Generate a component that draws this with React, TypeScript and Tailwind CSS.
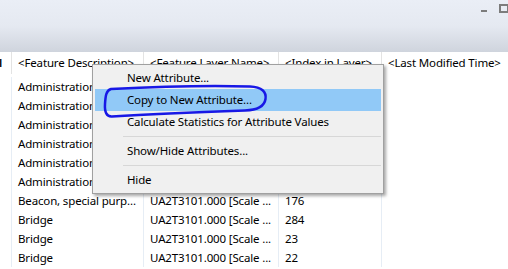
import React from 'react';

type Row = { desc: string; layer: string; index: string };

const rows: Row[] = [
  { desc: 'Administration area', layer: 'UA2T3101.000 [Scale ...', index: '12' },
  { desc: 'Administration area', layer: 'UA2T3101.000 [Scale ...', index: '13' },
  { desc: 'Administration area', layer: 'UA2T3101.000 [Scale ...', index: '14' },
  { desc: 'Administration area', layer: 'UA2T3101.000 [Scale ...', index: '15' },
  { desc: 'Administration area', layer: 'UA2T3101.000 [Scale ...', index: '16' },
  { desc: 'Administration area', layer: 'UA2T3101.000 [Scale ...', index: '17' },
  { desc: 'Beacon, special purp...', layer: 'UA2T3101.000 [Scale ...', index: '176' },
  { desc: 'Bridge', layer: 'UA2T3101.000 [Scale ...', index: '284' },
  { desc: 'Bridge', layer: 'UA2T3101.000 [Scale ...', index: '23' },
  { desc: 'Bridge', layer: 'UA2T3101.000 [Scale ...', index: '22' },
];

function MenuItem({ label, active }: { label: string; active?: boolean }) {
  return (
    <div className={`h-[22px] mx-[2px] pl-[32px] flex items-center whitespace-nowrap ${active ? 'bg-[#91c9f7]' : ''}`}>
      {label}
    </div>
  );
}

function Separator() {
  return (
    <div className="h-[7px] flex items-center ml-[30px] mr-[2px]">
      <div className="h-px w-full bg-[#d7d7d7]" />
    </div>
  );
}

export default function App() {
  return (
    <div
      className="relative w-[508px] h-[269px] overflow-hidden bg-white text-[11.5px] tracking-[-0.15px] text-black"
      style={{ fontFamily: '"Noto Sans", "Liberation Sans", sans-serif' }}
    >
      {/* title strip */}
      <div className="h-[52px] bg-gradient-to-b from-[#eaeef6] via-[#e5e9f1] to-[#cfd4dd] flex justify-end items-start">
        <div className="w-[6px] h-[2px] bg-[#7c7c7c] mt-[10px] mr-[12px]" />
        <div className="w-[10px] h-[9px] border-2 border-[#7c7c7c] mt-[4px] -mr-[1px]" />
      </div>

      {/* grid */}
      <div className="flex flex-col">
        <div className="flex h-[22px] items-center">
          <div className="w-[12px] h-full border-r border-[#e3e3e3] flex items-center overflow-hidden">
            <span className="-ml-[1px] font-semibold">l</span>
          </div>
          <div className="w-[132px] h-full border-r border-[#e3e3e3] pl-[6px] flex items-center whitespace-nowrap overflow-hidden">&lt;Feature Description&gt;</div>
          <div className="w-[135px] h-full border-r border-[#e3e3e3] pl-[6px] flex items-center whitespace-nowrap overflow-hidden">&lt;Feature Layer Name&gt;</div>
          <div className="w-[103px] h-full border-r border-[#e3e3e3] pl-[6px] flex items-center whitespace-nowrap overflow-hidden">&lt;Index in Layer&gt;</div>
          <div className="flex-1 h-full pl-[6px] flex items-center whitespace-nowrap">&lt;Last Modified Time&gt;</div>
        </div>
        <div className="flex pt-[3px]">
          <div className="w-[12px] border-r border-[#e6edf5]" />
          <div className="w-[132px] border-r border-[#e6edf5]">
            {rows.map((r, i) => (
              <div key={i} className="h-[19px] pl-[6px] flex items-center whitespace-nowrap overflow-hidden">{r.desc}</div>
            ))}
          </div>
          <div className="w-[135px] border-r border-[#e6edf5]">
            {rows.map((r, i) => (
              <div key={i} className="h-[19px] pl-[6px] flex items-center whitespace-nowrap overflow-hidden">{r.layer}</div>
            ))}
          </div>
          <div className="w-[103px] border-r border-[#e6edf5]">
            {rows.map((r, i) => (
              <div key={i} className="h-[19px] pl-[6px] flex items-center">{r.index}</div>
            ))}
          </div>
          <div className="flex-1" />
        </div>
      </div>

      {/* context menu */}
      <div className="absolute left-[92px] top-[64px] w-[292px] bg-[#f0f0f0] border border-[#a0a0a0] py-[2px] shadow-[2px_2px_3px_rgba(0,0,0,0.35)]">
        <MenuItem label="New Attribute..." />
        <MenuItem label="Copy to New Attribute..." active />
        <MenuItem label="Calculate Statistics for Attribute Values" />
        <Separator />
        <MenuItem label="Show/Hide Attributes..." />
        <Separator />
        <MenuItem label="Hide" />
      </div>

      {/* hand-drawn highlight */}
      <svg className="absolute left-0 top-0 pointer-events-none" width="508" height="269">
        <path
          d="M 111 89 C 150 87, 200 85, 250 86.5 C 262 87, 266.5 92, 265.5 99 C 264.5 106, 258 110, 245 110.5 C 200 112, 150 114, 112 116.5 C 106.5 117, 104.5 112, 105 104 C 105.5 96, 106 90.5, 111 89 Z"
          fill="none"
          stroke="#1818e6"
          strokeWidth="2.5"
          strokeLinejoin="round"
        />
      </svg>
    </div>
  );
}
